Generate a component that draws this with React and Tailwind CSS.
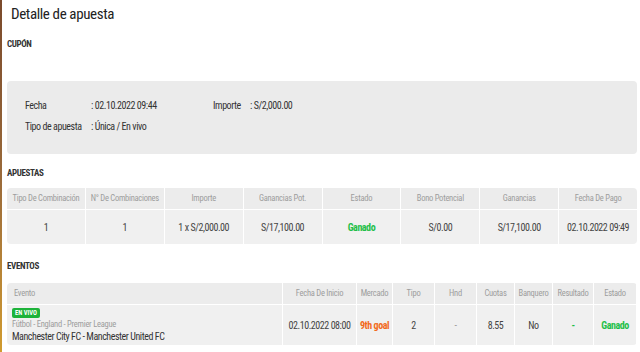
import React from 'react'

const font = "font-['Roboto_Condensed','Liberation_Sans_Narrow',Roboto,sans-serif]"

const apuestasHead = ['Tipo De Combinación', 'N° De Combinaciones', 'Importe', 'Ganancias Pot.', 'Estado', 'Bono Potencial', 'Ganancias', 'Fecha De Pago']
const apuestasRow = ['1', '1', '1 x S/2,000.00', 'S/17,100.00', 'Ganado', 'S/0.00', 'S/17,100.00', '02.10.2022 09:49']

const SectionTitle = ({ children, className = '' }) => (
    <div className={`text-[9px] tracking-[-0.04em] font-bold text-[#333] leading-[12px] ${className}`}>{children}</div>
)

const Green = ({ children }) => <span className="text-[#1fbf4a] font-bold">{children}</span>

const HeadCell = ({ children }) => (
    <div className="h-[21px] bg-[#ececec] text-[8.5px] tracking-[-0.03em] text-[#9d9d9d] flex items-center justify-center whitespace-nowrap">{children}</div>
)

const Cell = ({ children, className = 'text-[#444]' }) => (
    <div className={`bg-[#f0f0f0] text-[10px] tracking-[-0.045em] flex items-center justify-center whitespace-nowrap ${className}`}>{children}</div>
)

const App = () => {
    return (
        <div className={`relative w-[640px] h-[352px] bg-white overflow-hidden ${font}`}>
            {/* borde de la ventana de fondo */}
            <div className="absolute left-0 top-0 w-[2px] h-full bg-gradient-to-b from-[#7a4a2c] via-[#9a6a3a] to-[#d19b2e]" />

            <div className="pl-[7px] w-[637px]">
                <h1 className="pl-[4px] pt-[4px] text-[15px] tracking-[-0.025em] leading-[20px] text-[#222]">Detalle de apuesta</h1>

                <SectionTitle className="mt-[14px]">CUPÓN</SectionTitle>

                <div className="mt-[31px] h-[73px] rounded-[4px] bg-[#ebebeb] pl-[18px] pt-[14px] text-[10px] tracking-[-0.045em] text-[#333] leading-[21px] whitespace-nowrap">
                    <div className="flex">
                        <span className="w-[66px]">Fecha</span>
                        <span className="w-[122px]">: 02.10.2022 09:44</span>
                        <span className="w-[37px]">Importe</span>
                        <span>: S/2,000.00</span>
                    </div>
                    <div className="flex">
                        <span className="w-[66px]">Tipo de apuesta</span>
                        <span>: Única / En vivo</span>
                    </div>
                </div>

                <SectionTitle className="mt-[13px]">APUESTAS</SectionTitle>

                <div className="mt-[9px] grid grid-cols-8 gap-px bg-white rounded-[4px] overflow-hidden text-center">
                    {apuestasHead.map((h) => <HeadCell key={h}>{h}</HeadCell>)}
                    {apuestasRow.map((v, i) => (
                        <Cell key={i} className="h-[34px] text-[#444]">
                            {v === 'Ganado' ? <Green>{v}</Green> : v}
                        </Cell>
                    ))}
                </div>

                <SectionTitle className="mt-[16px]">EVENTOS</SectionTitle>

                <div className="mt-[11px] grid grid-cols-[275px_73px_35px_41px_41px_37px_37px_40px_42px] gap-px bg-white rounded-[4px] overflow-hidden text-center">
                    <div className="h-[21px] bg-[#ececec] text-[8.5px] tracking-[-0.03em] text-[#9d9d9d] flex items-center pl-[7px]">Evento</div>
                    {['Fecha De Inicio', 'Mercado', 'Tipo', 'Hnd', 'Cuotas', 'Banquero', 'Resultado', 'Estado'].map((h) => (
                        <HeadCell key={h}>{h}</HeadCell>
                    ))}

                    <div className="h-[40px] bg-[#f0f0f0] text-left pl-[5px] pt-[3px] whitespace-nowrap">
                        <span className="block w-fit rounded-[2px] bg-[#1db33a] px-[3px] text-[6.5px] leading-[10px] font-bold text-white">EN VIVO</span>
                        <div className="text-[8.5px] tracking-[-0.03em] leading-[12px] text-[#9d9d9d]">Fútbol - England - Premier League</div>
                        <div className="text-[10px] tracking-[-0.045em] leading-[13px] text-[#333]">Manchester City FC - Manchester United FC</div>
                    </div>
                    <Cell>02.10.2022 08:00</Cell>
                    <Cell className="text-[#f26a1b] font-bold">9th goal</Cell>
                    <Cell>2</Cell>
                    <Cell className="text-[#999]">-</Cell>
                    <Cell>8.55</Cell>
                    <Cell>No</Cell>
                    <Cell><Green>-</Green></Cell>
                    <Cell><Green>Ganado</Green></Cell>
                </div>
            </div>
        </div>
    )
}

export default App
